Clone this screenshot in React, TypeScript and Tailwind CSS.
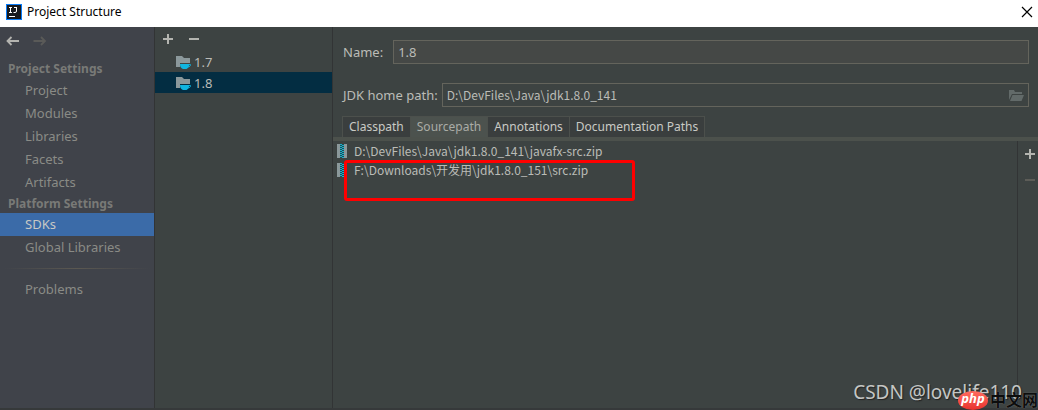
import { useState } from "react";

const projectItems = ["Project", "Modules", "Libraries", "Facets", "Artifacts"];
const platformItems = ["SDKs", "Global Libraries"];
const tabs = ["Classpath", "Sourcepath", "Annotations", "Documentation Paths"];
const sources = [
  "D:\\DevFiles\\Java\\jdk1.8.0_141\\javafx-src.zip",
  "F:\\Downloads\\开发用\\jdk1.8.0_151\\src.zip",
];

function AppIcon() {
  return (
    <svg width="16" height="16" viewBox="0 0 16 16" aria-hidden="true">
      <rect width="16" height="16" fill="#087cfa" />
      <rect x="1" y="1" width="14" height="14" fill="#17191d" />
      <path d="M3 3.5h3M4.500 3.500v5M3 8.500h3M8 3.500h3M10.500 3.500v3.500q0 1.500-1.500 1.500H7.500" fill="none" stroke="#fff" strokeWidth="1" />
      <path d="M3 12.500h6" stroke="#fff" strokeWidth="1" />
    </svg>
  );
}

function Arrow({ back }: { back?: boolean }) {
  return (
    <svg width="14" height="12" viewBox="0 0 14 12" fill="none" stroke="currentColor" strokeWidth="1.8" aria-hidden="true">
      {back ? <path d="M13 6H1.500M5.500 2 1.500 6l4 4" /> : <path d="M.5 6H12M8 2l4 4-4 4" />}
    </svg>
  );
}

function Plus() {
  return (
    <svg width="10" height="10" viewBox="0 0 10 10" aria-hidden="true">
      <path d="M0 4h4V0h2v4h4v2H6v4H4V6H0z" fill="currentColor" />
    </svg>
  );
}

function Minus() {
  return (
    <svg width="10" height="10" viewBox="0 0 10 10" aria-hidden="true">
      <path d="M0 4h10v2H0z" fill="currentColor" />
    </svg>
  );
}

function JdkIcon() {
  return (
    <svg width="16" height="16" viewBox="0 0 16 16" aria-hidden="true">
      <path d="M0 2h6l2 2h6v5H4v4H0z" fill="#8b989b" />
      <path d="M4 10h9v1c0 2-1 3-2.500 4H7c-2-.7-3-2-3-5z" fill="#10b5e0" />
      <path d="M12 10.600h2.500c0 1.600-1 2.200-2.500 2.200" fill="none" stroke="#10b5e0" strokeWidth="1" />
    </svg>
  );
}

function ZipIcon() {
  return (
    <svg className="shrink-0" width="10" height="14" viewBox="0 0 10 14" shapeRendering="crispEdges" aria-hidden="true">
      <path d="M0 0h3v14H0zM7 0h3v14H7z" fill="#8b989b" />
      <path d="M3 0h4v14H3z" fill="#254b50" />
      <path
        d="M3 0h2v1H3zM5 1h2v1H5zM3 2h2v1H3zM5 3h2v1H5zM3 4h2v1H3zM5 5h2v1H5zM3 6h2v1H3zM5 7h2v1H5zM3 8h2v1H3zM5 9h2v1H5zM3 10h2v1H3zM5 11h2v1H5zM3 12h2v1H3zM5 13h2v1H5z"
        fill="#16b3d2"
      />
    </svg>
  );
}

function FolderOpen() {
  return (
    <svg width="15" height="11" viewBox="0 0 15 11" fill="#626a69" aria-hidden="true">
      <path d="M0 0h5l1 2h7v2H3L0 10z" />
      <path d="M3.500 5H15l-2.500 6H1z" />
    </svg>
  );
}

function NavItem({ label, active, onSelect }: { label: string; active: boolean; onSelect: () => void }) {
  return (
    <li>
      <button
        type="button"
        onClick={onSelect}
        className={`block h-[23px] w-full pb-0.5 pl-[25px] text-left ${active ? "bg-[#3b6ba8] text-[#c8c8c4]" : "text-[#8a8b86]"}`}
      >
        {label}
      </button>
    </li>
  );
}

export default function App() {
  const [section, setSection] = useState("SDKs");
  const [sdk, setSdk] = useState("1.8");
  const [tab, setTab] = useState("Sourcepath");

  return (
    <div className="relative flex min-h-screen flex-col border-b-2 border-[#36393a] bg-[#3d4342] font-['Noto_Sans','Noto_Sans_CJK_SC',sans-serif] text-[13px] leading-5 text-[#bbbcb7]">
      <header className="flex h-[27px] items-center justify-between bg-white pr-[5px] pb-1 pl-1.5 text-xs text-black">
        <div className="flex items-center gap-[5px]">
          <AppIcon />
          <h1>Project Structure</h1>
        </div>
        <button type="button" aria-label="Close">
          <svg width="12" height="12" viewBox="0 0 12 12" stroke="#000" strokeWidth="1.200" aria-hidden="true">
            <path d="m1 1 10 10M11 1 1 11" />
          </svg>
        </button>
      </header>

      <div className="flex grow">
        <nav className="w-[155px] shrink-0 border-r border-[#323435] bg-[#40434a]">
          <div className="flex h-8 items-center gap-[13px] pb-1 pl-1.5">
            <button type="button" aria-label="Back" className="text-[#b4b4b0]"><Arrow back /></button>
            <button type="button" aria-label="Forward" disabled className="text-[#5a5a58]"><Arrow /></button>
          </div>
          <h2 className="h-5 pl-2 text-xs leading-5 font-bold text-[#797a77]">Project Settings</h2>
          <ul>
            {projectItems.map((item) => (
              <NavItem key={item} label={item} active={section === item} onSelect={() => setSection(item)} />
            ))}
          </ul>
          <h2 className="h-[19px] pl-2 text-xs leading-5 font-bold text-[#797a77]">Platform Settings</h2>
          <ul>
            {platformItems.map((item) => (
              <NavItem key={item} label={item} active={section === item} onSelect={() => setSection(item)} />
            ))}
          </ul>
          <div className="mx-1 my-[9px] h-px bg-linear-to-r from-transparent via-[#5b5851] to-transparent" />
          <ul>
            <NavItem label="Problems" active={section === "Problems"} onSelect={() => setSection("Problems")} />
          </ul>
        </nav>

        <section aria-label="SDK list" className="w-[178px] shrink-0 border-r border-[#323435]">
          <div className="flex h-6 items-center gap-4 pl-2 text-[#b4b5b0]">
            <button type="button" aria-label="Add SDK"><Plus /></button>
            <button type="button" aria-label="Remove SDK"><Minus /></button>
          </div>
          <ul>
            {["1.7", "1.8"].map((version) => (
              <li key={version}>
                <button
                  type="button"
                  onClick={() => setSdk(version)}
                  className={`flex h-[21px] w-full items-center gap-0.5 pl-[21px] ${sdk === version ? "bg-[#032d42]" : ""}`}
                >
                  <JdkIcon />
                  {version}
                </button>
              </li>
            ))}
          </ul>
        </section>

        <main className="flex min-w-0 grow flex-col pt-[13px]">
          <div className="flex items-center gap-2.5 pr-[9px] pl-2.5">
            <label htmlFor="sdk-name">Name:</label>
            <input id="sdk-name" defaultValue="1.8" className="h-6 min-w-0 grow border border-[#64645c] bg-[#454846] px-1" />
          </div>
          <div className="mt-[19px] flex items-center gap-1 pr-[9px] pl-2.5">
            <label htmlFor="jdk-path">JDK home path:</label>
            <div className="flex h-6 min-w-0 grow items-center border border-[#64645c] pr-1">
              <input
                id="jdk-path"
                defaultValue={"D:\\DevFiles\\Java\\jdk1.8.0_141"}
                className="min-w-0 grow bg-transparent px-1 font-['Noto_Sans_CJK_SC',sans-serif] text-xs leading-5"
              />
              <button type="button" aria-label="Browse"><FolderOpen /></button>
            </div>
          </div>
          <div role="tablist" className="mt-[9px] ml-[9px] flex self-start border-t border-l border-[#4c504c]">
            {tabs.map((name) => (
              <button
                key={name}
                type="button"
                role="tab"
                aria-selected={tab === name}
                onClick={() => setTab(name)}
                className={`h-5 border-r border-[#4c504c] px-1.5 text-xs leading-5 ${tab === name ? "bg-[#4c524e] text-[#aaaca6]" : "bg-[#3a3e3e] text-[#c9cac5]"}`}
              >
                {name}
              </button>
            ))}
          </div>
          <div className="h-1 bg-[#4c514c]" />
          <div className="flex grow">
            <div className="relative min-w-0 grow border-r border-[#323435]">
              <ul className="font-['Noto_Sans_CJK_SC',sans-serif] text-xs leading-4">
                {sources.map((path) => (
                  <li key={path} className="flex h-[19px] items-center gap-[7px] pl-1">
                    <ZipIcon />
                    {path}
                  </li>
                ))}
              </ul>
              <div className="pointer-events-none absolute top-[19px] left-[11px] h-[41px] w-[291px] rounded-[3px] border-3 border-[#ff0000]" />
            </div>
            <div className="flex w-5 shrink-0 flex-col items-center gap-4 pt-2 pl-1 text-[#b4b5b0]">
              <button type="button" aria-label="Add path" className="flex"><Plus /></button>
              <button type="button" aria-label="Remove path" disabled className="flex text-[#5d5d58]"><Minus /></button>
            </div>
          </div>
        </main>
      </div>

      <p className="pointer-events-none absolute right-4 bottom-1 font-['Noto_Sans',sans-serif] text-[19px] leading-6 text-[#c4c6c4] [text-shadow:1px_1px_1px_#222]">
        CSDN @lovelife110
      </p>
      <div className="pointer-events-none absolute right-0 -bottom-1 flex items-center gap-0.5">
        <span className="flex h-[19px] w-[30px] items-center justify-center rounded-[50%] bg-linear-to-b from-[#ff6a60] to-[#e8302c] pb-1 text-[13px] leading-4 font-bold text-white italic">
          php
        </span>
        <span className="text-base leading-6 font-bold text-[#0c0d0d] [text-shadow:0_0_1px_#8b8e8d]">中文网</span>
      </div>
    </div>
  );
}
